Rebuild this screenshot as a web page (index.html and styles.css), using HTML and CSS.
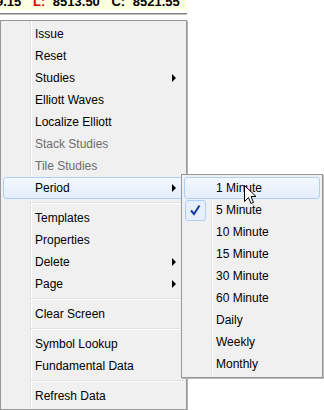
FILE: index.html
```html
<!DOCTYPE html>
<html lang="en">
<head>
  <meta charset="UTF-8">
  <title>Chart Menu</title>
  <link rel="stylesheet" href="styles.css">
</head>
<body>
  <div class="ticker">
    <div class="quote">
      <span class="val first">9.15</span>
      <span class="key low">L:</span>
      <span class="val">8513.50</span>
      <span class="key">C:</span>
      <span class="val">8521.55</span>
    </div>
  </div>
  <div class="rule"></div>

  <div class="menu">
    <div class="item"><span class="mark"></span>Issue</div>
    <div class="item"><span class="mark"></span>Reset</div>
    <div class="item"><span class="mark"></span>Studies<span class="arrow"></span></div>
    <div class="item"><span class="mark"></span>Elliott Waves</div>
    <div class="item"><span class="mark"></span>Localize Elliott</div>
    <div class="item disabled"><span class="mark"></span>Stack Studies</div>
    <div class="item disabled"><span class="mark"></span>Tile Studies</div>
    <div class="item active"><span class="mark"></span>Period<span class="arrow"></span></div>
    <div class="sep"></div>
    <div class="item"><span class="mark"></span>Templates</div>
    <div class="item"><span class="mark"></span>Properties</div>
    <div class="item"><span class="mark"></span>Delete<span class="arrow"></span></div>
    <div class="item"><span class="mark"></span>Page<span class="arrow"></span></div>
    <div class="sep"></div>
    <div class="item"><span class="mark"></span>Clear Screen</div>
    <div class="sep"></div>
    <div class="item"><span class="mark"></span>Symbol Lookup</div>
    <div class="item"><span class="mark"></span>Fundamental Data</div>
    <div class="sep"></div>
    <div class="item"><span class="mark"></span>Refresh Data</div>

    <div class="menu submenu">
      <div class="item active"><span class="mark"></span>1 Minute</div>
      <div class="item">
        <span class="mark">
          <span class="check">
            <svg width="19" height="19" viewBox="0 0 19 19">
              <path d="M5 9.5 L8 13 L13.5 4.5" fill="none" stroke="#1a3aa0" stroke-width="2"/>
            </svg>
          </span>
        </span>5 Minute
      </div>
      <div class="item"><span class="mark"></span>10 Minute</div>
      <div class="item"><span class="mark"></span>15 Minute</div>
      <div class="item"><span class="mark"></span>30 Minute</div>
      <div class="item"><span class="mark"></span>60 Minute</div>
      <div class="item"><span class="mark"></span>Daily</div>
      <div class="item"><span class="mark"></span>Weekly</div>
      <div class="item"><span class="mark"></span>Monthly</div>
    </div>
  </div>

  <svg class="cursor" width="13" height="20" viewBox="0 0 13 20">
    <path d="M0.5 0.5 L0.5 16.5 L4.5 12.5 L7 18.5 L9.5 17.5 L7 11.5 L12 11.5 Z" fill="#fff" stroke="#000" stroke-width="1"/>
  </svg>
</body>
</html>
```

FILE: styles.css
```css
body {
  margin: 0;
  background: #fff;
  font-family: "Liberation Sans", Arial, sans-serif;
  position: relative;
  width: 324px;
  height: 410px;
  overflow: hidden;
}
.ticker {
  width: 187px;
  height: 10px;
  background: #ffffe1;
  overflow: hidden;
}
.quote {
  margin-top: -6px;
  line-height: 15px;
  font-size: 13px;
  font-weight: bold;
  white-space: nowrap;
  color: #000;
}
.quote span {
  display: inline-block;
}
.first {
  margin-left: -4px;
  margin-right: 8px;
}
.key {
  margin-right: 4px;
}
.low {
  color: #e00000;
}
.val {
  margin-right: 8px;
}
.rule {
  width: 187px;
  height: 1px;
  margin-top: 3px;
  background: #808080;
  border-bottom: 1px solid #c4c4c4;
}
.menu {
  position: relative;
  box-sizing: border-box;
  width: 187px;
  margin-top: 5px;
  padding: 2px;
  background-color: #f0f0f0;
  background-image: linear-gradient(to right, transparent 29px, #e2e3e3 29px, #e2e3e3 30px, #fff 30px, #fff 31px, transparent 31px);
  border: 1px solid #979797;
  box-shadow: 1px 1px 0 #b8b8b8;
  font-size: 12px;
  color: #000;
}
.submenu {
  position: absolute;
  left: 180px;
  top: 153px;
  width: 142px;
  margin: 0;
}
.item {
  display: flex;
  align-items: center;
  box-sizing: border-box;
  height: 22px;
  border: 1px solid transparent;
  border-radius: 3px;
  white-space: nowrap;
}
.item.active {
  border-color: #aecff7;
  background: linear-gradient(#f4f8fe, #e3edfb);
}
.disabled {
  color: #6d6d6d;
}
.mark {
  display: flex;
  align-items: center;
  flex: none;
  width: 31px;
  height: 100%;
}
.check {
  display: block;
  box-sizing: border-box;
  width: 21px;
  height: 21px;
  border: 1px solid #aecff7;
  border-radius: 3px;
  background: #e6effb;
}
.check svg {
  display: block;
}
.arrow {
  margin-left: auto;
  margin-right: 7px;
  width: 0;
  height: 0;
  border-left: 4px solid #000;
  border-top: 4px solid transparent;
  border-bottom: 4px solid transparent;
}
.sep {
  height: 8px;
  margin-left: 28px;
  background: linear-gradient(transparent 3px, #e0e0e0 3px, #e0e0e0 4px, #fff 4px, #fff 5px, transparent 5px);
}
.cursor {
  position: absolute;
  left: 244px;
  top: 185px;
}
```
